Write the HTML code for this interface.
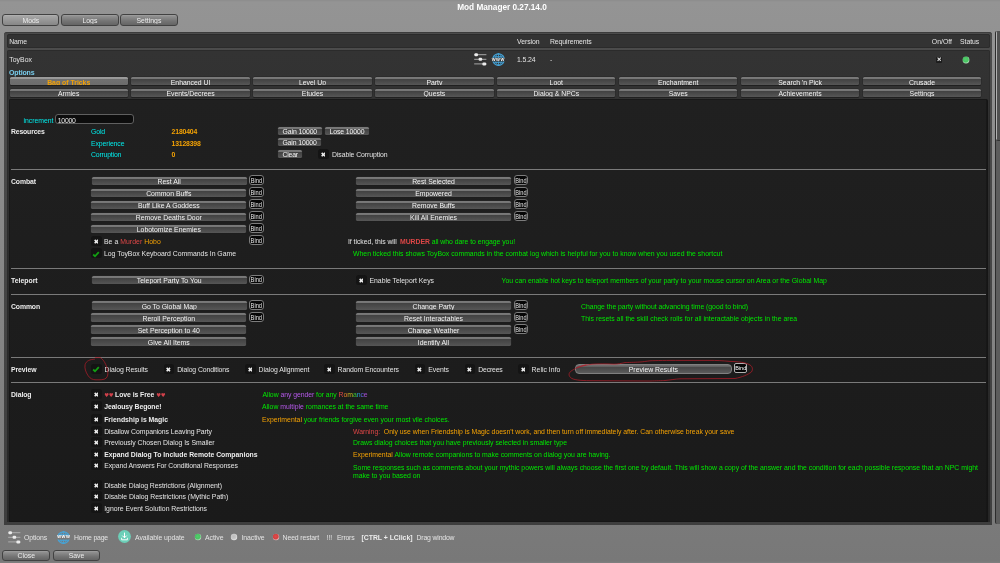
<!DOCTYPE html><html><head><meta charset="utf-8"><title>Mod Manager</title><style>html,body{margin:0;padding:0;}
body{width:1000px;height:563px;overflow:hidden;position:relative;
 background:linear-gradient(#8c8c8c 0,#949494 2px,#787878 561px,#808080 563px);
 font-family:"Liberation Sans",sans-serif;font-size:6.87px;line-height:9px;color:#e4e4e4;}
#app{left:0;top:0;width:1000px;height:563px;will-change:transform;overflow:hidden;}
div,span,svg{position:absolute;box-sizing:border-box;}
span.t span{position:static;}
.t{white-space:nowrap;}
.c{text-align:center;}
.b{font-weight:bold;text-shadow:none;}
.w{color:#ececec;}
.cy{color:#00eaea;}
.or{color:#f4a204;}
.gr{color:#00e800;}
.rd{color:#dc4646;}
.pu{color:#b458e8;}
.hh{color:#d0404a;font-family:'DejaVu Sans',sans-serif;font-size:5.4px;letter-spacing:-0.35px;font-weight:normal;vertical-align:0.2px;}
.opt{color:#78ccec;font-weight:bold;}
.outer{background:linear-gradient(#4c4c4c,#3e3e3e);border-radius:3px 3px 0 0;box-shadow:inset 0 1px 0 #3c3c3c;}
.row{background:#333333;border-radius:2.5px;box-shadow:inset 0 0 0 0.7px #2a2a2a;}
.content{background:linear-gradient(#202020,#1a1a1a);border-radius:2.5px;box-shadow:inset 0 0 0 0.7px #161616;}
.btn{border-radius:1.5px;background:linear-gradient(#7a7a7a 0,#767676 1.5px,#424242 2.3px,#464646 3.5px,#565656 100%);box-shadow:0 0 0 0.5px #262626,0 0.8px 0.3px #131313;color:#f4f4f4;}
.btn.act{background:linear-gradient(#9c9c9c 0,#989898 1.6px,#707070 2.3px,#6c6c6c 100%);}
.btn.hov{border-radius:4px;border:0.8px solid #808080;background:linear-gradient(#707070 0,#6a6a6a 1.2px,#484848 2.4px,#4c4c4c 4px,#5c5c5c 100%);box-shadow:none;}
.tbtn{border-radius:3px;background:linear-gradient(#a0a0a0 0,#8e8e8e 1.5px,#747474 60%,#646464 100%);border:0.9px solid #424242;color:#ececec;}
.tbtn.act{background:linear-gradient(#b4b4b4 0,#a4a4a4 1.5px,#949494 60%,#868686 100%);}
.hr{background:#7a7a7a;height:1px;}
.bind{border:0.7px solid #7c7c7c;border-radius:3px;text-align:center;color:#e4e4e4;background:#060606;overflow:hidden;}
.bt{font-size:6.3px;line-height:7.4px;transform:scaleX(0.9);text-align:center;white-space:nowrap;color:#e8e8e8;}
.cb{background:#141414;border-radius:2.5px;}
.inp{background:#0d0d0d;border:0.7px solid #606060;border-radius:3px;}
.rb{background:linear-gradient(90deg,#e84848 0,#e84848 16.9%,#f08828 16.9%,#f08828 29.9%,#d8d020 29.9%,#d8d020 49.3%,#38d038 49.3%,#38d038 62.3%,#28a8e0 62.3%,#28a8e0 75.3%,#6868e8 75.3%,#6868e8 87%,#b050e0 87%,#b050e0 100%);-webkit-background-clip:text;background-clip:text;color:transparent;-webkit-text-fill-color:transparent;}
</style></head><body><div id="app">
<span id="t1" class="t c b" style="left:400px;width:204px;top:2.6px;letter-spacing:-0.013px;font-size:8.25px;color:#fff;">Mod Manager 0.27.14.0</span>
<div class="tbtn act" style="left:2.20px;top:14.2px;width:57.3px;height:11.6px;"><div style="left:0;top:0;width:100%;height:8.6px;overflow:hidden;"><span class="t c" style="left:0;width:100%;top:0.7px;">Mods</span></div></div>
<div class="tbtn" style="left:61.25px;top:14.2px;width:57.3px;height:11.6px;"><div style="left:0;top:0;width:100%;height:8.6px;overflow:hidden;"><span class="t c" style="left:0;width:100%;top:0.7px;">Logs</span></div></div>
<div class="tbtn" style="left:120.30px;top:14.2px;width:57.3px;height:11.6px;"><div style="left:0;top:0;width:100%;height:8.6px;overflow:hidden;"><span class="t c" style="left:0;width:100%;top:0.7px;">Settings</span></div></div>
<div class="outer" style="left:4.4px;top:32px;width:987.6px;height:492.5px;"></div>
<div class="row" style="left:7px;top:34px;width:983px;height:13.7px;"></div>
<span id="t2" class="t " style="left:9.2px;top:37.2px;letter-spacing:-0.178px;">Name</span>
<span id="t3" class="t " style="left:517px;top:37.2px;letter-spacing:-0.042px;">Version</span>
<span id="t4" class="t " style="left:550px;top:37.2px;letter-spacing:-0.092px;">Requirements</span>
<span id="t5" class="t " style="left:931.8px;top:37.2px;letter-spacing:0.018px;">On/Off</span>
<span id="t6" class="t " style="left:960px;top:37.2px;letter-spacing:-0.042px;">Status</span>
<div class="row" style="left:7px;top:50px;width:983px;height:472.4px;border-radius:2px 2px 0 0;background:linear-gradient(#333333,#262626);"></div>
<span id="t7" class="t " style="left:9.3px;top:55.1px;letter-spacing:0.033px;">ToyBox</span>
<span id="t8" class="t " style="left:517px;top:55.1px;letter-spacing:-0.113px;">1.5.24</span>
<span id="t9" class="t " style="left:550px;top:55.1px;">-</span>
<span id="t10" class="t opt" style="left:9px;top:67.6px;letter-spacing:-0.136px;font-size:7px;">Options</span>
<svg style="position:absolute;left:474px;top:53px" width="13" height="13" viewBox="0 0 13 13"><g fill="none" stroke="#b4b4b4" stroke-width="0.9"><path d="M0.2 1.7 H12.4 M0.2 6.3 H12.4 M0.2 10.9 H12.4"/></g><g fill="#ececec"><rect x="0.4" y="0.2" width="3.6" height="3" rx="1.2"/><rect x="4.6" y="4.8" width="3.6" height="3" rx="1.2"/><rect x="8.4" y="9.4" width="3.8" height="3" rx="1.2"/></g></svg>

<div style="left:491.5px;top:53px;width:13px;height:13px;"><svg style="left:0;top:0" width="13" height="13" viewBox="0 0 13 13"><defs><clipPath id="gc1"><rect x="0" y="0" width="13" height="5.1"/><rect x="0" y="8.5" width="13" height="4.5"/></clipPath></defs><g clip-path="url(#gc1)" fill="none" stroke="#45a6dc"><circle cx="6.5" cy="6.5" r="5.85" stroke-width="1.05"/><ellipse cx="6.5" cy="6.5" rx="3" ry="5.85" stroke-width="0.85"/><path d="M6.5 0.5 V12.5" stroke-width="0.8"/><path d="M1.6 3.1 Q6.5 4.2 11.4 3.1 M1.6 9.9 Q6.5 8.8 11.4 9.9" stroke-width="0.8"/><path d="M0.9 4.8 H12.1 M0.9 8.8 H12.1" stroke-width="0.6"/></g></svg><span class="t b" style="left:-0.5px;top:2.85px;width:14.6px;text-align:center;font-size:4.1px;line-height:8px;letter-spacing:0.55px;color:#fff;">WWW</span></div>

<div class="" style="left:935.5px;top:56.5px;width:6.5px;height:6.2px;background:#1c1c1c;border-radius:1px;"></div>
<svg style="position:absolute;left:936.6px;top:57.4px" width="4.4" height="4.4" viewBox="0 0 10 10"><path d="M0.5 2.2 L2.2 0.5 L5 3.3 L7.8 0.5 L9.5 2.2 L6.7 5 L9.5 7.8 L7.8 9.5 L5 6.7 L2.2 9.5 L0.5 7.8 L3.3 5 Z" fill="#dddddd"/></svg>
<svg style="left:961px;top:54.6px" width="10" height="10" viewBox="0 0 10 10"><defs><radialGradient id="dg1" cx="0.45" cy="0.42" r="0.55"><stop offset="0" stop-color="#54cc6c"/><stop offset="0.7" stop-color="#48c462"/><stop offset="1" stop-color="#b0e0ba"/></radialGradient></defs><circle cx="5" cy="5" r="3.4" fill="url(#dg1)"/></svg>
<div class="btn act" style="left:9.5px;top:77px;width:118.4px;height:8px;overflow:hidden;"><span class="t c b or" style="left:0;width:100%;top:0.9px;">Bag of Tricks</span></div>
<div class="btn" style="left:131.4px;top:77px;width:118.4px;height:8px;overflow:hidden;"><span class="t c " style="left:0;width:100%;top:0.5px;">Enhanced UI</span></div>
<div class="btn" style="left:253.3px;top:77px;width:118.4px;height:8px;overflow:hidden;"><span class="t c " style="left:0;width:100%;top:0.5px;">Level Up</span></div>
<div class="btn" style="left:375.2px;top:77px;width:118.4px;height:8px;overflow:hidden;"><span class="t c " style="left:0;width:100%;top:0.5px;">Party</span></div>
<div class="btn" style="left:497.1px;top:77px;width:118.4px;height:8px;overflow:hidden;"><span class="t c " style="left:0;width:100%;top:0.5px;">Loot</span></div>
<div class="btn" style="left:619.0px;top:77px;width:118.4px;height:8px;overflow:hidden;"><span class="t c " style="left:0;width:100%;top:0.5px;">Enchantment</span></div>
<div class="btn" style="left:740.9px;top:77px;width:118.4px;height:8px;overflow:hidden;"><span class="t c " style="left:0;width:100%;top:0.5px;">Search 'n Pick</span></div>
<div class="btn" style="left:862.8px;top:77px;width:118.4px;height:8px;overflow:hidden;"><span class="t c " style="left:0;width:100%;top:0.5px;">Crusade</span></div>
<div class="btn" style="left:9.5px;top:89px;width:118.4px;height:8px;overflow:hidden;"><span class="t c " style="left:0;width:100%;top:0.3px;">Armies</span></div>
<div class="btn" style="left:131.4px;top:89px;width:118.4px;height:8px;overflow:hidden;"><span class="t c " style="left:0;width:100%;top:0.3px;">Events/Decrees</span></div>
<div class="btn" style="left:253.3px;top:89px;width:118.4px;height:8px;overflow:hidden;"><span class="t c " style="left:0;width:100%;top:0.3px;">Etudes</span></div>
<div class="btn" style="left:375.2px;top:89px;width:118.4px;height:8px;overflow:hidden;"><span class="t c " style="left:0;width:100%;top:0.3px;">Quests</span></div>
<div class="btn" style="left:497.1px;top:89px;width:118.4px;height:8px;overflow:hidden;"><span class="t c " style="left:0;width:100%;top:0.3px;">Dialog &amp; NPCs</span></div>
<div class="btn" style="left:619.0px;top:89px;width:118.4px;height:8px;overflow:hidden;"><span class="t c " style="left:0;width:100%;top:0.3px;">Saves</span></div>
<div class="btn" style="left:740.9px;top:89px;width:118.4px;height:8px;overflow:hidden;"><span class="t c " style="left:0;width:100%;top:0.3px;">Achievements</span></div>
<div class="btn" style="left:862.8px;top:89px;width:118.4px;height:8px;overflow:hidden;"><span class="t c " style="left:0;width:100%;top:0.3px;">Settings</span></div>
<div class="content" style="left:9px;top:99px;width:979px;height:423.4px;border-radius:2px 2px 0 0;border-right:1.6px solid #151515;"></div>
<div class="" style="left:995px;top:30.5px;width:5px;height:493.5px;background:#5c5c5c;border-left:1px solid #2c2c2c;border-radius:2px 0 0 2px;"></div>
<div class="" style="left:996px;top:30.5px;width:4px;height:110.5px;background:linear-gradient(90deg,#b0b0b0 0,#b0b0b0 1px,#505050 1.5px);border-radius:2px 0 0 2px;border-bottom:1px solid #333;"></div>
<span id="t11" class="t cy" style="left:23.6px;top:115.7px;letter-spacing:-0.036px;">increment</span>
<div class="inp" style="left:55.4px;top:114px;width:78.4px;height:10.2px;"></div>
<span id="t12" class="t w" style="left:57.8px;top:115.7px;letter-spacing:-0.250px;">10000</span>
<span id="t13" class="t b w" style="left:11px;top:127.1px;letter-spacing:-0.164px;">Resources</span>
<span id="t14" class="t cy" style="left:91px;top:127.1px;letter-spacing:-0.125px;">Gold</span>
<span id="t15" class="t b or" style="left:171.6px;top:127.1px;letter-spacing:-0.160px;">2180404</span>
<div class="btn" style="left:278px;top:127px;width:43.6px;height:8px;overflow:hidden;"><span id="t16" class="t c" style="left:0;width:100%;top:-0.3px;letter-spacing:-0.088px;">Gain 10000</span></div>
<div class="btn" style="left:325px;top:127px;width:44px;height:8px;overflow:hidden;"><span id="t17" class="t c" style="left:0;width:100%;top:-0.3px;letter-spacing:-0.086px;">Lose 10000</span></div>
<span id="t18" class="t cy" style="left:91px;top:138.7px;letter-spacing:-0.093px;">Experience</span>
<span id="t19" class="t b or" style="left:171.6px;top:138.7px;letter-spacing:-0.191px;">13128398</span>
<div class="btn" style="left:278px;top:138.4px;width:43.2px;height:8px;overflow:hidden;"><span id="t20" class="t c" style="left:0;width:100%;top:-0.3px;letter-spacing:-0.108px;">Gain 10000</span></div>
<span id="t21" class="t cy" style="left:91px;top:150.1px;letter-spacing:-0.183px;">Corruption</span>
<span id="t22" class="t b or" style="left:171.4px;top:150.1px;">0</span>
<div class="btn" style="left:278px;top:150px;width:24.4px;height:8px;overflow:hidden;"><span id="t23" class="t c" style="left:0;width:100%;top:-0.3px;letter-spacing:-0.201px;">Clear</span></div>
<div class="cb" style="left:318.2px;top:149.3px;width:10.6px;height:10.2px;"></div>
<svg style="position:absolute;left:320.7px;top:152.0px" width="4.7" height="5.1" viewBox="0 0 10 10"><path d="M0.2 2.7 L2.7 0.2 L5 2.5 L7.3 0.2 L9.8 2.7 L7.5 5 L9.8 7.3 L7.3 9.8 L5 7.5 L2.7 9.8 L0.2 7.3 L2.5 5 Z" fill="#ececec"/></svg>
<span id="t24" class="t " style="left:332px;top:150.1px;letter-spacing:-0.078px;">Disable Corruption</span>
<div class="hr" style="left:11px;top:169px;width:975px;height:1px;"></div>
<span id="t25" class="t b w" style="left:11px;top:176.7px;letter-spacing:-0.091px;">Combat</span>
<div class="btn" style="left:91.9px;top:177.2px;width:154.7px;height:8px;overflow:hidden;"><span id="t26" class="t c" style="left:0;width:100%;top:-0.3px;">Rest All</span></div>
<div class="bind" style="left:249px;top:175.39999999999998px;width:14.8px;height:9.2px;"></div><span class="bt" style="left:246px;width:20.8px;top:177px;">Bind</span>
<div class="btn" style="left:91.2px;top:189.2px;width:155.2px;height:8px;overflow:hidden;"><span id="t27" class="t c" style="left:0;width:100%;top:-0.3px;">Common Buffs</span></div>
<div class="bind" style="left:249px;top:187.39999999999998px;width:14.5px;height:9.2px;"></div><span class="bt" style="left:246px;width:20.5px;top:189px;">Bind</span>
<div class="btn" style="left:91.2px;top:201.2px;width:155.2px;height:8px;overflow:hidden;"><span id="t28" class="t c" style="left:0;width:100%;top:-0.3px;">Buff Like A Goddess</span></div>
<div class="bind" style="left:249px;top:199.39999999999998px;width:14.5px;height:9.2px;"></div><span class="bt" style="left:246px;width:20.5px;top:201px;">Bind</span>
<div class="btn" style="left:91.2px;top:213.2px;width:155.2px;height:8px;overflow:hidden;"><span id="t29" class="t c" style="left:0;width:100%;top:-0.3px;">Remove Deaths Door</span></div>
<div class="bind" style="left:249px;top:211.39999999999998px;width:14.5px;height:9.2px;"></div><span class="bt" style="left:246px;width:20.5px;top:213px;">Bind</span>
<div class="btn" style="left:91.2px;top:225.2px;width:155.2px;height:8px;overflow:hidden;"><span id="t30" class="t c" style="left:0;width:100%;top:-0.3px;">Lobotomize Enemies</span></div>
<div class="bind" style="left:249px;top:223.39999999999998px;width:14.5px;height:9.2px;"></div><span class="bt" style="left:246px;width:20.5px;top:225px;">Bind</span>
<div class="btn" style="left:356px;top:177.2px;width:155px;height:8px;overflow:hidden;"><span id="t31" class="t c" style="left:0;width:100%;top:-0.3px;">Rest Selected</span></div>
<div class="bind" style="left:513.6px;top:175.39999999999998px;width:14px;height:9.2px;"></div><span class="bt" style="left:510.6px;width:20px;top:177px;">Bind</span>
<div class="btn" style="left:356px;top:189.2px;width:155px;height:8px;overflow:hidden;"><span id="t32" class="t c" style="left:0;width:100%;top:-0.3px;">Empowered</span></div>
<div class="bind" style="left:513.6px;top:187.39999999999998px;width:14px;height:9.2px;"></div><span class="bt" style="left:510.6px;width:20px;top:189px;">Bind</span>
<div class="btn" style="left:356px;top:201.2px;width:155px;height:8px;overflow:hidden;"><span id="t33" class="t c" style="left:0;width:100%;top:-0.3px;">Remove Buffs</span></div>
<div class="bind" style="left:513.6px;top:199.39999999999998px;width:14px;height:9.2px;"></div><span class="bt" style="left:510.6px;width:20px;top:201px;">Bind</span>
<div class="btn" style="left:356px;top:213.2px;width:155px;height:8px;overflow:hidden;"><span id="t34" class="t c" style="left:0;width:100%;top:-0.3px;">Kill All Enemies</span></div>
<div class="bind" style="left:513.6px;top:211.39999999999998px;width:14px;height:9.2px;"></div><span class="bt" style="left:510.6px;width:20px;top:213px;">Bind</span>
<div class="cb" style="left:91px;top:236.3px;width:10.6px;height:10.2px;"></div>
<svg style="position:absolute;left:93.5px;top:239.0px" width="4.7" height="5.1" viewBox="0 0 10 10"><path d="M0.2 2.7 L2.7 0.2 L5 2.5 L7.3 0.2 L9.8 2.7 L7.5 5 L9.8 7.3 L7.3 9.8 L5 7.5 L2.7 9.8 L0.2 7.3 L2.5 5 Z" fill="#ececec"/></svg>
<span id="t35" class="t " style="left:104px;top:237.1px;letter-spacing:0.045px;">Be a <span class="rd">Murder</span> <span class="or">Hobo</span></span>
<div class="bind" style="left:249px;top:235.4px;width:14.6px;height:9.2px;"></div><span class="bt" style="left:246px;width:20.6px;top:237px;">Bind</span>
<span id="t36" class="t " style="left:348px;top:236.7px;letter-spacing:-0.037px;">If ticked, this will <span class="rd b" style="margin-left:1.3px">MURDER</span> <span class="gr">all who dare to engage you!</span></span>
<div class="cb" style="left:91px;top:248.3px;width:10.6px;height:10.2px;"></div>
<svg style="position:absolute;left:92.2px;top:250.5px" width="8" height="7" viewBox="0 0 8 7"><path d="M1.2 3.5 L3 5.3 L6.8 1.1" stroke="#12a012" stroke-width="1.8" fill="none"/></svg>
<span id="t37" class="t " style="left:104px;top:248.7px;letter-spacing:-0.005px;">Log ToyBox Keyboard Commands In Game</span>
<span id="t38" class="t gr" style="left:353px;top:248.5px;letter-spacing:0.010px;">When ticked this shows ToyBox commands in the combat log which is helpful for you to know when you used the shortcut</span>
<div class="hr" style="left:11px;top:268px;width:975px;height:1px;"></div>
<span id="t39" class="t b w" style="left:11px;top:276.1px;letter-spacing:0.005px;">Teleport</span>
<div class="btn" style="left:91.8px;top:276px;width:154.8px;height:8px;overflow:hidden;"><span id="t40" class="t c" style="left:0;width:100%;top:-0.3px;">Teleport Party To You</span></div>
<div class="bind" style="left:249px;top:274.6px;width:14.6px;height:9.2px;"></div><span class="bt" style="left:246px;width:20.6px;top:276px;">Bind</span>
<div class="cb" style="left:356px;top:275.3px;width:10.6px;height:10.2px;"></div>
<svg style="position:absolute;left:358.5px;top:278.0px" width="4.7" height="5.1" viewBox="0 0 10 10"><path d="M0.2 2.7 L2.7 0.2 L5 2.5 L7.3 0.2 L9.8 2.7 L7.5 5 L9.8 7.3 L7.3 9.8 L5 7.5 L2.7 9.8 L0.2 7.3 L2.5 5 Z" fill="#ececec"/></svg>
<span id="t41" class="t " style="left:369.5px;top:276px;letter-spacing:-0.010px;">Enable Teleport Keys</span>
<span id="t42" class="t gr" style="left:501.5px;top:275.7px;letter-spacing:-0.004px;">You can enable hot keys to teleport members of your party to your mouse cursor on Area or the Global Map</span>
<div class="hr" style="left:11px;top:294px;width:975px;height:1px;"></div>
<span id="t43" class="t b w" style="left:11px;top:301.5px;letter-spacing:-0.122px;">Common</span>
<div class="btn" style="left:91.9px;top:301.3px;width:154.7px;height:8.5px;overflow:hidden;"><span id="t44" class="t c" style="left:0;width:100%;top:0.4px;">Go To Global Map</span></div>
<div class="bind" style="left:249px;top:300.40000000000003px;width:14.6px;height:9.2px;"></div><span class="bt" style="left:246px;width:20.6px;top:302px;">Bind</span>
<div class="btn" style="left:91.2px;top:313.3px;width:155.2px;height:8.5px;overflow:hidden;"><span id="t45" class="t c" style="left:0;width:100%;top:0.4px;">Reroll Perception</span></div>
<div class="bind" style="left:249px;top:312.40000000000003px;width:14.6px;height:9.2px;"></div><span class="bt" style="left:246px;width:20.6px;top:314px;">Bind</span>
<div class="btn" style="left:91.2px;top:325.3px;width:155.2px;height:8.5px;overflow:hidden;"><span id="t46" class="t c" style="left:0;width:100%;top:0.4px;">Set Perception to 40</span></div>
<div class="btn" style="left:91.2px;top:337.3px;width:155.2px;height:8.5px;overflow:hidden;"><span id="t47" class="t c" style="left:0;width:100%;top:0.4px;">Give All Items</span></div>
<div class="btn" style="left:356px;top:301.3px;width:155px;height:8.5px;overflow:hidden;"><span id="t48" class="t c" style="left:0;width:100%;top:0.4px;">Change Party</span></div>
<div class="bind" style="left:513.6px;top:300.40000000000003px;width:14px;height:9.2px;"></div><span class="bt" style="left:510.6px;width:20px;top:302px;">Bind</span>
<div class="btn" style="left:356px;top:313.3px;width:155px;height:8.5px;overflow:hidden;"><span id="t49" class="t c" style="left:0;width:100%;top:0.4px;">Reset Interactables</span></div>
<div class="bind" style="left:513.6px;top:312.40000000000003px;width:14px;height:9.2px;"></div><span class="bt" style="left:510.6px;width:20px;top:314px;">Bind</span>
<div class="btn" style="left:356px;top:325.3px;width:155px;height:8.5px;overflow:hidden;"><span id="t50" class="t c" style="left:0;width:100%;top:0.4px;">Change Weather</span></div>
<div class="bind" style="left:513.6px;top:324.40000000000003px;width:14px;height:9.2px;"></div><span class="bt" style="left:510.6px;width:20px;top:326px;">Bind</span>
<div class="btn" style="left:356px;top:337.3px;width:155px;height:8.5px;overflow:hidden;"><span id="t51" class="t c" style="left:0;width:100%;top:0.4px;">Identify All</span></div>
<span id="t52" class="t gr" style="left:581px;top:302.1px;letter-spacing:-0.029px;">Change the party without advancing time (good to bind)</span>
<span id="t53" class="t gr" style="left:581px;top:313.7px;letter-spacing:0.010px;">This resets all the skill check rolls for all interactable objects in the area</span>
<div class="hr" style="left:11px;top:357px;width:975px;height:1px;"></div>
<span id="t54" class="t b w" style="left:11px;top:364.7px;letter-spacing:-0.077px;">Preview</span>
<div class="cb" style="left:91px;top:364.2px;width:10.6px;height:10.2px;"></div>
<svg style="position:absolute;left:92.2px;top:366.4px" width="8" height="7" viewBox="0 0 8 7"><path d="M1.2 3.5 L3 5.3 L6.8 1.1" stroke="#12a012" stroke-width="1.8" fill="none"/></svg>
<span id="t55" class="t " style="left:104.6px;top:364.7px;letter-spacing:-0.060px;">Dialog Results</span>
<div class="cb" style="left:163.6px;top:364.2px;width:10.6px;height:10.2px;"></div>
<svg style="position:absolute;left:166.1px;top:366.9px" width="4.7" height="5.1" viewBox="0 0 10 10"><path d="M0.2 2.7 L2.7 0.2 L5 2.5 L7.3 0.2 L9.8 2.7 L7.5 5 L9.8 7.3 L7.3 9.8 L5 7.5 L2.7 9.8 L0.2 7.3 L2.5 5 Z" fill="#ececec"/></svg>
<span id="t56" class="t " style="left:177.2px;top:364.7px;letter-spacing:-0.092px;">Dialog Conditions</span>
<div class="cb" style="left:245px;top:364.2px;width:10.6px;height:10.2px;"></div>
<svg style="position:absolute;left:247.5px;top:366.9px" width="4.7" height="5.1" viewBox="0 0 10 10"><path d="M0.2 2.7 L2.7 0.2 L5 2.5 L7.3 0.2 L9.8 2.7 L7.5 5 L9.8 7.3 L7.3 9.8 L5 7.5 L2.7 9.8 L0.2 7.3 L2.5 5 Z" fill="#ececec"/></svg>
<span id="t57" class="t " style="left:258.6px;top:364.7px;letter-spacing:-0.043px;">Dialog Alignment</span>
<div class="cb" style="left:324px;top:364.2px;width:10.6px;height:10.2px;"></div>
<svg style="position:absolute;left:326.5px;top:366.9px" width="4.7" height="5.1" viewBox="0 0 10 10"><path d="M0.2 2.7 L2.7 0.2 L5 2.5 L7.3 0.2 L9.8 2.7 L7.5 5 L9.8 7.3 L7.3 9.8 L5 7.5 L2.7 9.8 L0.2 7.3 L2.5 5 Z" fill="#ececec"/></svg>
<span id="t58" class="t " style="left:337.6px;top:364.7px;letter-spacing:-0.067px;">Random Encounters</span>
<div class="cb" style="left:414.6px;top:364.2px;width:10.6px;height:10.2px;"></div>
<svg style="position:absolute;left:417.1px;top:366.9px" width="4.7" height="5.1" viewBox="0 0 10 10"><path d="M0.2 2.7 L2.7 0.2 L5 2.5 L7.3 0.2 L9.8 2.7 L7.5 5 L9.8 7.3 L7.3 9.8 L5 7.5 L2.7 9.8 L0.2 7.3 L2.5 5 Z" fill="#ececec"/></svg>
<span id="t59" class="t " style="left:428.20000000000005px;top:364.7px;letter-spacing:-0.031px;">Events</span>
<div class="cb" style="left:464.6px;top:364.2px;width:10.6px;height:10.2px;"></div>
<svg style="position:absolute;left:467.1px;top:366.9px" width="4.7" height="5.1" viewBox="0 0 10 10"><path d="M0.2 2.7 L2.7 0.2 L5 2.5 L7.3 0.2 L9.8 2.7 L7.5 5 L9.8 7.3 L7.3 9.8 L5 7.5 L2.7 9.8 L0.2 7.3 L2.5 5 Z" fill="#ececec"/></svg>
<span id="t60" class="t " style="left:478.20000000000005px;top:364.7px;letter-spacing:-0.164px;">Decrees</span>
<div class="cb" style="left:518px;top:364.2px;width:10.6px;height:10.2px;"></div>
<svg style="position:absolute;left:520.5px;top:366.9px" width="4.7" height="5.1" viewBox="0 0 10 10"><path d="M0.2 2.7 L2.7 0.2 L5 2.5 L7.3 0.2 L9.8 2.7 L7.5 5 L9.8 7.3 L7.3 9.8 L5 7.5 L2.7 9.8 L0.2 7.3 L2.5 5 Z" fill="#ececec"/></svg>
<span id="t61" class="t " style="left:531.6px;top:364.7px;letter-spacing:0.021px;">Relic Info</span>
<div class="btn hov" style="left:575px;top:364.2px;width:156.8px;height:9.4px;overflow:hidden;"><span class="t c" style="left:0;width:100%;top:0.1px;">Preview Results</span></div>
<div class="bind" style="left:734px;top:363px;width:13.4px;height:9.5px;border-radius:2px;border-color:#b0b0b0;"></div><span class="bt" style="left:731px;width:19.4px;top:364px;font-size:6.1px;color:#fff;">Bind</span>
<svg style="left:0;top:340px" width="1000" height="50" viewBox="0 340 1000 50"><g fill="none" stroke="#b41c28" stroke-width="0.72" stroke-linecap="round"><path d="M95.3 357.6 L100.2 357.6 C103 359 105.5 363 107 368 C108.2 372 108.4 376 106.2 378.1 C104.2 380 100 379.8 96 379.8 C92.5 379.8 90.2 378.6 88.2 375.8 C85.6 372 84.4 368 85.1 364.6 C86 361 90 359.3 94.5 359.2"/><path d="M586 364.8 C580 366 574 369 571 371.2 C568.6 373 568.4 375.5 570.6 377.6 C573 379.9 580 380.6 590 380.7 L650 381 C656 380.8 662 380.7 665 380.5 C670 380 676 379 680 378.8 L735 378.5 C742 377.2 748 374.6 751.4 372 C753.2 369.5 752.6 366.5 750 365 C746 362.5 738 361.6 730 361.4 C722 360.6 716 360.4 710 360.4 L680 360.4 C668 360.4 655 360.5 650 360.8 C646 361.3 643 361.8 640 362 C634 362.4 628 362.4 625 362.6 C621 363.4 618 364.2 614 364.2 C606 363.7 598 363.8 592 364.2 C588 364.6 582 366 577 367.5"/></g></svg>
<div class="hr" style="left:11px;top:382.2px;width:975px;height:1px;"></div>
<span id="t62" class="t b w" style="left:11px;top:390.1px;letter-spacing:-0.095px;">Dialog</span>
<div class="cb" style="left:91px;top:389.3px;width:10.6px;height:10.2px;"></div>
<svg style="position:absolute;left:93.5px;top:392.0px" width="4.7" height="5.1" viewBox="0 0 10 10"><path d="M0.2 2.7 L2.7 0.2 L5 2.5 L7.3 0.2 L9.8 2.7 L7.5 5 L9.8 7.3 L7.3 9.8 L5 7.5 L2.7 9.8 L0.2 7.3 L2.5 5 Z" fill="#ececec"/></svg>
<span id="t63" class="t b w" style="left:104.2px;top:390.1px;letter-spacing:-0.055px;"><span class="rd hh">&#9829;&#9829;</span> Love is Free <span class="rd hh">&#9829;&#9829;</span></span>
<div class="cb" style="left:91px;top:400.9px;width:10.6px;height:10.2px;"></div>
<svg style="position:absolute;left:93.5px;top:403.59999999999997px" width="4.7" height="5.1" viewBox="0 0 10 10"><path d="M0.2 2.7 L2.7 0.2 L5 2.5 L7.3 0.2 L9.8 2.7 L7.5 5 L9.8 7.3 L7.3 9.8 L5 7.5 L2.7 9.8 L0.2 7.3 L2.5 5 Z" fill="#ececec"/></svg>
<span id="t64" class="t b w" style="left:104.2px;top:401.7px;letter-spacing:-0.095px;">Jealousy Begone!</span>
<div class="cb" style="left:91px;top:414.3px;width:10.6px;height:10.2px;"></div>
<svg style="position:absolute;left:93.5px;top:417.0px" width="4.7" height="5.1" viewBox="0 0 10 10"><path d="M0.2 2.7 L2.7 0.2 L5 2.5 L7.3 0.2 L9.8 2.7 L7.5 5 L9.8 7.3 L7.3 9.8 L5 7.5 L2.7 9.8 L0.2 7.3 L2.5 5 Z" fill="#ececec"/></svg>
<span id="t65" class="t b w" style="left:104.2px;top:415.1px;letter-spacing:-0.013px;">Friendship is Magic</span>
<div class="cb" style="left:91px;top:425.9px;width:10.6px;height:10.2px;"></div>
<svg style="position:absolute;left:93.5px;top:428.59999999999997px" width="4.7" height="5.1" viewBox="0 0 10 10"><path d="M0.2 2.7 L2.7 0.2 L5 2.5 L7.3 0.2 L9.8 2.7 L7.5 5 L9.8 7.3 L7.3 9.8 L5 7.5 L2.7 9.8 L0.2 7.3 L2.5 5 Z" fill="#ececec"/></svg>
<span id="t66" class="t " style="left:104.2px;top:426.7px;letter-spacing:-0.061px;">Disallow Companions Leaving Party</span>
<div class="cb" style="left:91px;top:437.3px;width:10.6px;height:10.2px;"></div>
<svg style="position:absolute;left:93.5px;top:440.0px" width="4.7" height="5.1" viewBox="0 0 10 10"><path d="M0.2 2.7 L2.7 0.2 L5 2.5 L7.3 0.2 L9.8 2.7 L7.5 5 L9.8 7.3 L7.3 9.8 L5 7.5 L2.7 9.8 L0.2 7.3 L2.5 5 Z" fill="#ececec"/></svg>
<span id="t67" class="t " style="left:104.2px;top:438.1px;letter-spacing:-0.016px;">Previously Chosen Dialog Is Smaller</span>
<div class="cb" style="left:91px;top:448.9px;width:10.6px;height:10.2px;"></div>
<svg style="position:absolute;left:93.5px;top:451.59999999999997px" width="4.7" height="5.1" viewBox="0 0 10 10"><path d="M0.2 2.7 L2.7 0.2 L5 2.5 L7.3 0.2 L9.8 2.7 L7.5 5 L9.8 7.3 L7.3 9.8 L5 7.5 L2.7 9.8 L0.2 7.3 L2.5 5 Z" fill="#ececec"/></svg>
<span id="t68" class="t b w" style="left:104.2px;top:449.7px;letter-spacing:-0.011px;">Expand Dialog To Include Remote Companions</span>
<div class="cb" style="left:91px;top:460.3px;width:10.6px;height:10.2px;"></div>
<svg style="position:absolute;left:93.5px;top:463.0px" width="4.7" height="5.1" viewBox="0 0 10 10"><path d="M0.2 2.7 L2.7 0.2 L5 2.5 L7.3 0.2 L9.8 2.7 L7.5 5 L9.8 7.3 L7.3 9.8 L5 7.5 L2.7 9.8 L0.2 7.3 L2.5 5 Z" fill="#ececec"/></svg>
<span id="t69" class="t " style="left:104.2px;top:461.1px;letter-spacing:-0.054px;">Expand Answers For Conditional Responses</span>
<div class="cb" style="left:91px;top:479.9px;width:10.6px;height:10.2px;"></div>
<svg style="position:absolute;left:93.5px;top:482.59999999999997px" width="4.7" height="5.1" viewBox="0 0 10 10"><path d="M0.2 2.7 L2.7 0.2 L5 2.5 L7.3 0.2 L9.8 2.7 L7.5 5 L9.8 7.3 L7.3 9.8 L5 7.5 L2.7 9.8 L0.2 7.3 L2.5 5 Z" fill="#ececec"/></svg>
<span id="t70" class="t " style="left:104.2px;top:480.7px;letter-spacing:-0.030px;">Disable Dialog Restrictions (Alignment)</span>
<div class="cb" style="left:91px;top:491.3px;width:10.6px;height:10.2px;"></div>
<svg style="position:absolute;left:93.5px;top:494.0px" width="4.7" height="5.1" viewBox="0 0 10 10"><path d="M0.2 2.7 L2.7 0.2 L5 2.5 L7.3 0.2 L9.8 2.7 L7.5 5 L9.8 7.3 L7.3 9.8 L5 7.5 L2.7 9.8 L0.2 7.3 L2.5 5 Z" fill="#ececec"/></svg>
<span id="t71" class="t " style="left:104.2px;top:492.1px;letter-spacing:-0.007px;">Disable Dialog Restrictions (Mythic Path)</span>
<div class="cb" style="left:91px;top:502.9px;width:10.6px;height:10.2px;"></div>
<svg style="position:absolute;left:93.5px;top:505.59999999999997px" width="4.7" height="5.1" viewBox="0 0 10 10"><path d="M0.2 2.7 L2.7 0.2 L5 2.5 L7.3 0.2 L9.8 2.7 L7.5 5 L9.8 7.3 L7.3 9.8 L5 7.5 L2.7 9.8 L0.2 7.3 L2.5 5 Z" fill="#ececec"/></svg>
<span id="t72" class="t " style="left:104.2px;top:503.7px;letter-spacing:-0.016px;">Ignore Event Solution Restrictions</span>
<span id="t73" class="t " style="left:262.4px;top:390.1px;letter-spacing:-0.050px;"><span class="gr">Allow <span class="pu">any gender</span> for any </span><span class="rb">Romance</span></span>
<span id="t74" class="t " style="left:262px;top:401.7px;letter-spacing:-0.005px;"><span class="gr">Allow <span class="pu">multiple</span> romances at the same time</span></span>
<span id="t75" class="t " style="left:262px;top:415.1px;letter-spacing:-0.012px;"><span class="or">Experimental</span> <span class="gr">your friends forgive even your most vile choices.</span></span>
<span id="t76" class="t " style="left:353px;top:427.1px;letter-spacing:-0.016px;"><span class="rd">Warning:</span> &nbsp;<span class="or">Only use when Friendship is Magic doesn't work, and then turn off immediately after. Can otherwise break your save</span></span>
<span id="t77" class="t gr" style="left:353px;top:438.3px;letter-spacing:-0.004px;">Draws dialog choices that you have previously selected in smaller type</span>
<span id="t78" class="t " style="left:353px;top:450.1px;letter-spacing:-0.014px;"><span class="or">Experimental</span> <span class="gr">Allow remote companions to make comments on dialog you are having.</span></span>
<span id="t79" class="t gr" style="left:353px;top:463.1px;letter-spacing:-0.003px;">Some responses such as comments about your mythic powers will always choose the first one by default. This will show a copy of the answer and the condition for each possible response that an NPC might</span>
<span id="t80" class="t gr" style="left:353px;top:470.7px;letter-spacing:-0.005px;">make to you based on</span>
<svg style="position:absolute;left:8px;top:530.8px" width="13" height="13" viewBox="0 0 13 13"><g fill="none" stroke="#b4b4b4" stroke-width="0.9"><path d="M0.2 1.7 H12.4 M0.2 6.3 H12.4 M0.2 10.9 H12.4"/></g><g fill="#ececec"><rect x="0.4" y="0.2" width="3.6" height="3" rx="1.2"/><rect x="4.6" y="4.8" width="3.6" height="3" rx="1.2"/><rect x="8.4" y="9.4" width="3.8" height="3" rx="1.2"/></g></svg>

<div style="left:57px;top:530.5px;width:13px;height:13px;"><svg style="left:0;top:0" width="13" height="13" viewBox="0 0 13 13"><defs><clipPath id="gc2"><rect x="0" y="0" width="13" height="5.1"/><rect x="0" y="8.5" width="13" height="4.5"/></clipPath></defs><g clip-path="url(#gc2)" fill="none" stroke="#45a6dc"><circle cx="6.5" cy="6.5" r="5.85" stroke-width="1.05"/><ellipse cx="6.5" cy="6.5" rx="3" ry="5.85" stroke-width="0.85"/><path d="M6.5 0.5 V12.5" stroke-width="0.8"/><path d="M1.6 3.1 Q6.5 4.2 11.4 3.1 M1.6 9.9 Q6.5 8.8 11.4 9.9" stroke-width="0.8"/><path d="M0.9 4.8 H12.1 M0.9 8.8 H12.1" stroke-width="0.6"/></g></svg><span class="t b" style="left:-0.5px;top:2.85px;width:14.6px;text-align:center;font-size:4.1px;line-height:8px;letter-spacing:0.55px;color:#fff;">WWW</span></div>

<svg style="position:absolute;left:118px;top:530.2px" width="13" height="13" viewBox="0 0 13 13"><circle cx="6.5" cy="6.5" r="6.4" fill="#6ccfb8"/><g fill="none" stroke="#ffffff" stroke-width="1" stroke-linecap="round" stroke-linejoin="round"><path d="M6.5 3 V7.6 M4.6 5.9 L6.5 7.8 L8.4 5.9"/><path d="M3.6 8.2 V9.8 H9.4 V8.2" stroke-width="0.9"/></g></svg>

<svg style="left:193px;top:532.1px" width="10" height="10" viewBox="0 0 10 10"><defs><radialGradient id="dg2" cx="0.45" cy="0.42" r="0.55"><stop offset="0" stop-color="#54cc6c"/><stop offset="0.7" stop-color="#48c462"/><stop offset="1" stop-color="#b0dcb8"/></radialGradient></defs><circle cx="5" cy="5" r="3.2" fill="url(#dg2)"/></svg>
<svg style="left:229.4px;top:532.1px" width="10" height="10" viewBox="0 0 10 10"><defs><radialGradient id="dg3" cx="0.45" cy="0.42" r="0.55"><stop offset="0" stop-color="#bcbcbc"/><stop offset="0.7" stop-color="#c8c8c8"/><stop offset="1" stop-color="#e4e4e4"/></radialGradient></defs><circle cx="5" cy="5" r="3.2" fill="url(#dg3)"/></svg>
<svg style="left:270.5px;top:532.1px" width="10" height="10" viewBox="0 0 10 10"><defs><radialGradient id="dg4" cx="0.45" cy="0.42" r="0.55"><stop offset="0" stop-color="#dc4c4c"/><stop offset="0.7" stop-color="#d44040"/><stop offset="1" stop-color="#e0b4b4"/></radialGradient></defs><circle cx="5" cy="5" r="3.2" fill="url(#dg4)"/></svg>
<span id="t81" class="t " style="left:24px;top:532.7px;letter-spacing:-0.092px;">Options</span>
<span id="t82" class="t " style="left:74px;top:532.7px;letter-spacing:-0.163px;">Home page</span>
<span id="t83" class="t " style="left:135px;top:532.7px;letter-spacing:-0.063px;">Available update</span>
<span id="t84" class="t " style="left:205px;top:532.7px;letter-spacing:-0.015px;">Active</span>
<span id="t85" class="t " style="left:241.5px;top:532.7px;letter-spacing:-0.068px;">Inactive</span>
<span id="t86" class="t " style="left:282.6px;top:532.7px;letter-spacing:-0.113px;">Need restart</span>
<span id="t87" class="t " style="left:326.5px;top:532.7px;">!!!</span>
<span id="t88" class="t " style="left:337px;top:532.7px;letter-spacing:-0.215px;">Errors</span>
<span id="t89" class="t b w" style="left:361.5px;top:532.7px;letter-spacing:-0.009px;">[CTRL + LClick]</span>
<span id="t90" class="t " style="left:416.5px;top:532.7px;letter-spacing:-0.160px;">Drag window</span>
<div class="tbtn" style="left:2.3px;top:549.8px;width:48px;height:10.8px;overflow:hidden;"><span class="t c" style="left:0;width:100%;top:0.4px;">Close</span></div>
<div class="tbtn" style="left:53.3px;top:549.8px;width:46.4px;height:10.8px;overflow:hidden;"><span class="t c" style="left:0;width:100%;top:0.4px;">Save</span></div>
</div></body></html>
